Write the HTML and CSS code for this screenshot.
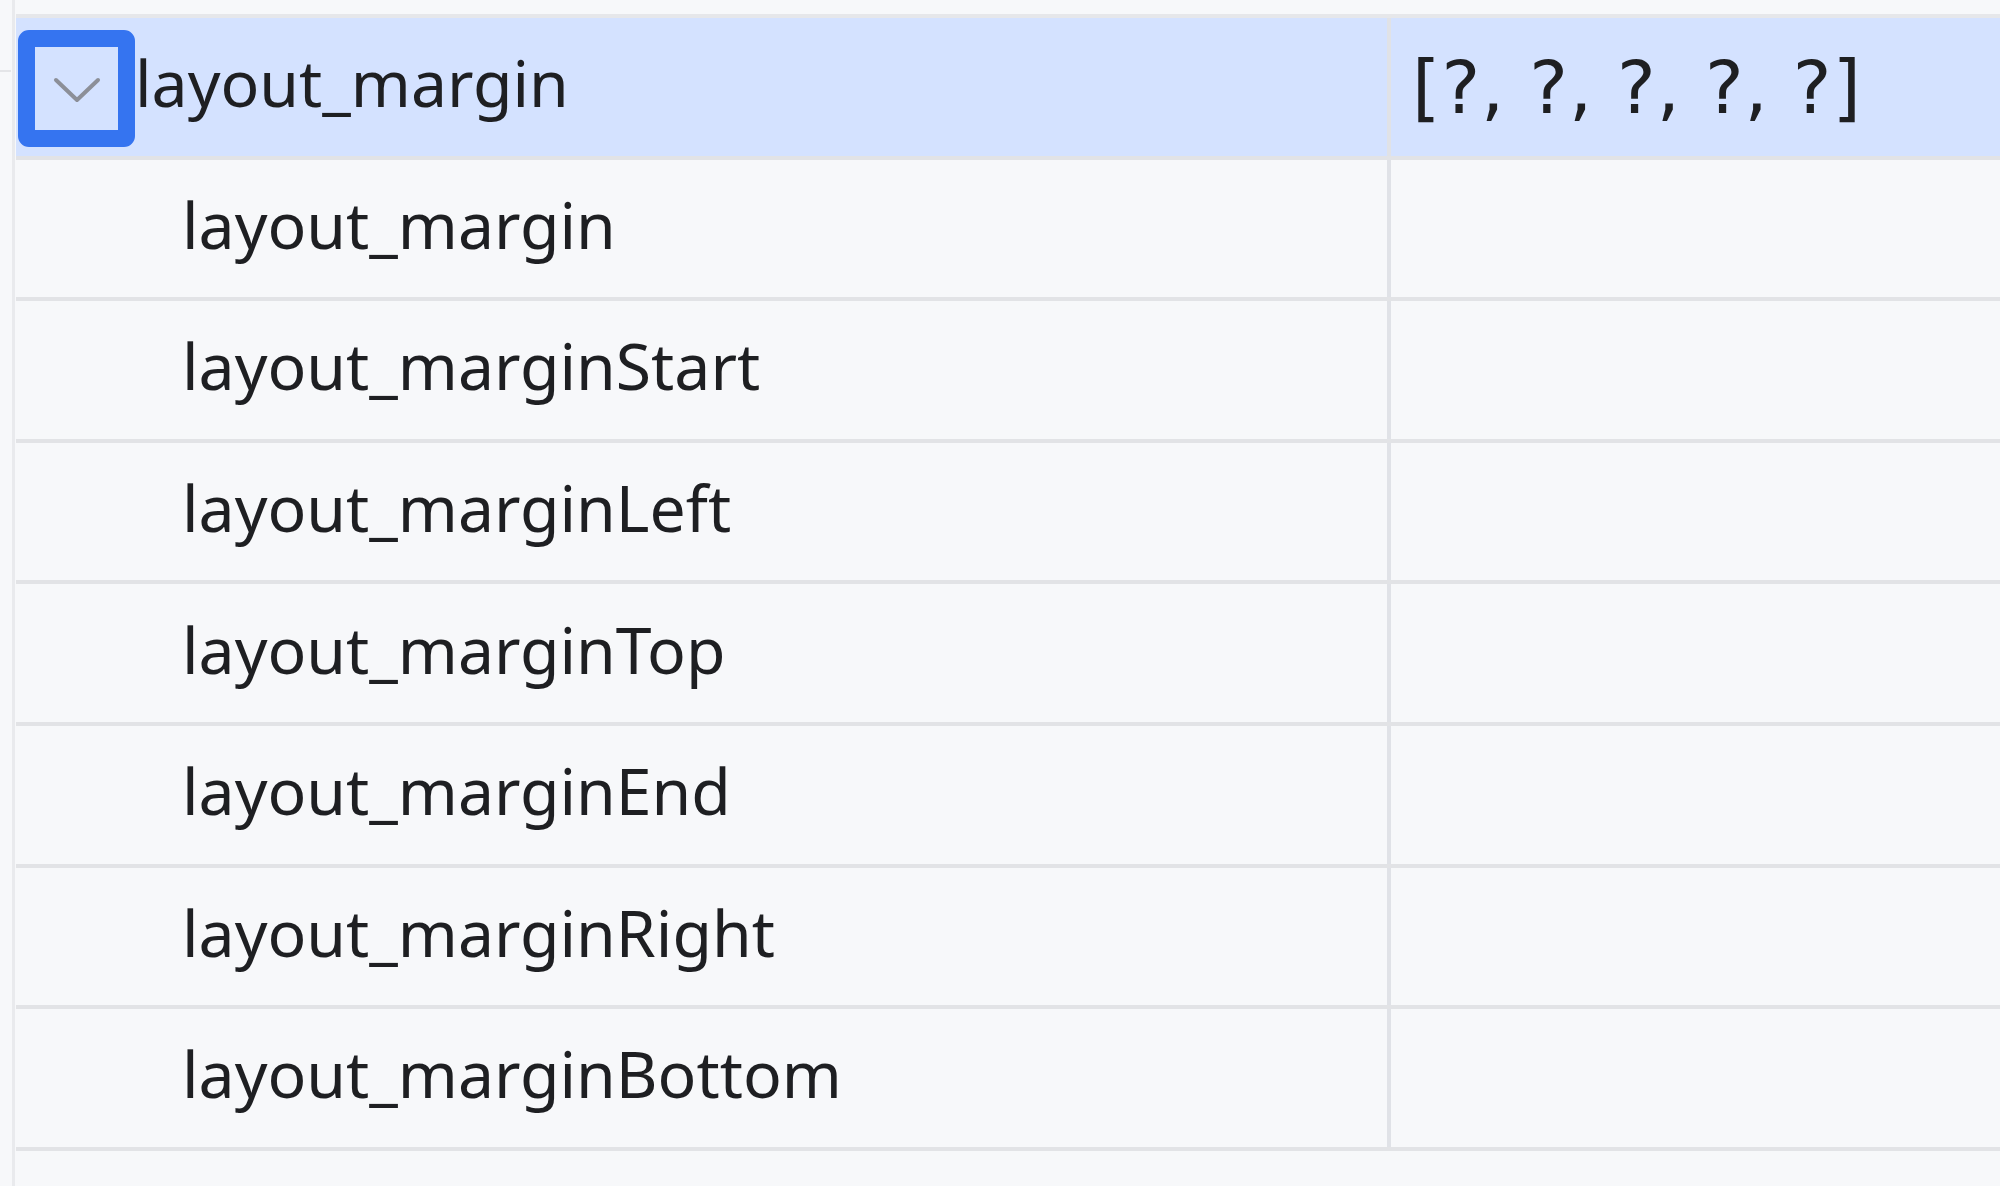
FILE: index.html
```html
<!DOCTYPE html>
<html lang="en">
<head>
<meta charset="utf-8">
<title>Attributes</title>
<link rel="stylesheet" href="styles.css">
</head>
<body>
<div class="panel">
  <span class="stub"></span>
  <div class="table">
    <div class="row selected">
      <div class="cell name">
        <span class="toggle">
          <svg class="chevron" viewBox="0 0 48 26" width="48" height="26" aria-hidden="true">
            <path d="M3 3 L24 23 L45 3" fill="none" stroke="#8c8f98" stroke-width="4" stroke-linecap="round" stroke-linejoin="round"/>
          </svg>
        </span>
        <span class="label">layout_margin</span>
      </div>
      <div class="cell value">[?, ?, ?, ?, ?]</div>
    </div>
    <div class="row">
      <div class="cell name child"><span class="label">layout_margin</span></div>
      <div class="cell value"></div>
    </div>
    <div class="row">
      <div class="cell name child"><span class="label">layout_marginStart</span></div>
      <div class="cell value"></div>
    </div>
    <div class="row">
      <div class="cell name child"><span class="label">layout_marginLeft</span></div>
      <div class="cell value"></div>
    </div>
    <div class="row">
      <div class="cell name child"><span class="label">layout_marginTop</span></div>
      <div class="cell value"></div>
    </div>
    <div class="row">
      <div class="cell name child"><span class="label">layout_marginEnd</span></div>
      <div class="cell value"></div>
    </div>
    <div class="row">
      <div class="cell name child"><span class="label">layout_marginRight</span></div>
      <div class="cell value"></div>
    </div>
    <div class="row">
      <div class="cell name child"><span class="label">layout_marginBottom</span></div>
      <div class="cell value"></div>
    </div>
  </div>
</div>
</body>
</html>
```
FILE: styles.css
```css
html, body {
  margin: 0;
  padding: 0;
}

body {
  width: 2000px;
  height: 1186px;
  overflow: hidden;
  background: #f7f8fa;
  color: #1e1f22;
  font-family: "Noto Sans", "DejaVu Sans", sans-serif;
}

.panel {
  position: relative;
  height: 1186px;
  box-sizing: border-box;
  margin-left: 12px;
  border-left: 3px solid #e9eaed;
  padding-top: 14px;
}

.stub {
  position: absolute;
  left: -15px;
  top: 70px;
  width: 11px;
  height: 2px;
  background: #e4e5e8;
}

.table {
  border-top: 4px solid #e6e7ea;
  margin-left: 1px;
}

.row {
  display: grid;
  grid-template-columns: 1371px 1fr;
  height: 141.6px;
  box-sizing: border-box;
  border-bottom: 4px solid #e2e3e6;
  background: #f7f8fa;
}

.row.selected {
  background: #d4e2ff;
}

.cell {
  display: flex;
  align-items: center;
  min-width: 0;
}

.name {
  padding-left: 2px;
  padding-bottom: 9px;
  box-sizing: border-box;
}

.name.child {
  padding-left: 166px;
}

.label {
  font-size: 64.3px;
  line-height: 1;
  white-space: nowrap;
}

.toggle {
  flex: none;
  width: 117px;
  height: 117px;
  box-sizing: border-box;
  border: 17.5px solid #3574f0;
  border-radius: 11px;
  display: flex;
  align-items: center;
  justify-content: center;
  margin-top: 12px;
}

.chevron {
  display: block;
  margin-top: 2px;
}

.value {
  border-left: 4px solid #e0e2e7;
  padding-left: 21px;
  font-family: "DejaVu Sans", sans-serif;
  font-size: 73px;
  letter-spacing: 0.9px;
  line-height: 1;
  white-space: nowrap;
}
```
